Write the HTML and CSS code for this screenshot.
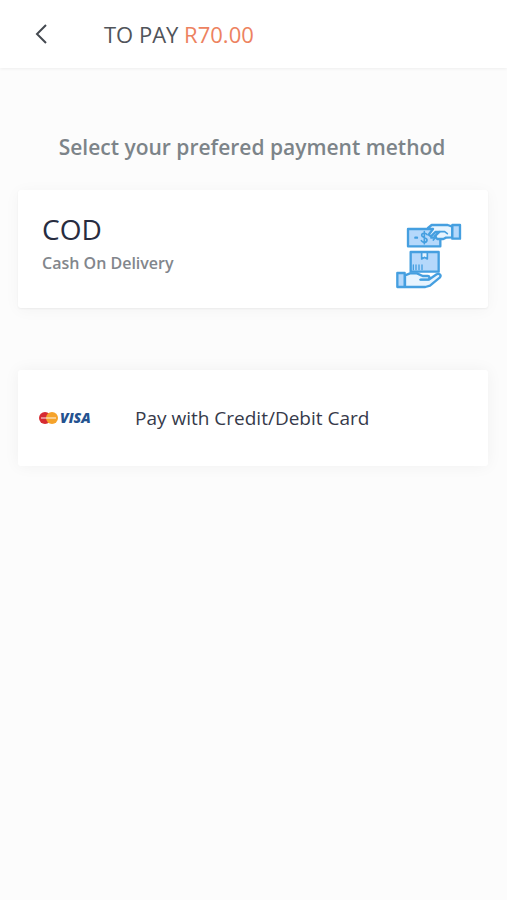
FILE: index.html
```html
<!DOCTYPE html>
<html lang="en">
<head>
<meta charset="utf-8">
<meta name="viewport" content="width=device-width, initial-scale=1">
<title>Payment</title>
<link rel="stylesheet" href="styles.css">
</head>
<body>
<header class="topbar">
  <button class="back" type="button" aria-label="Back">
    <svg width="12" height="20" viewBox="0 0 12 20" fill="none" stroke="currentColor" stroke-width="2"><path d="M11 1 2 10l9 9"/></svg>
  </button>
  <h1 class="title">TO PAY <span class="amount">R70.00</span></h1>
</header>
<main class="content">
  <h2 class="prompt">Select your prefered payment method</h2>
  <button class="card cod" type="button">
    <span class="cod-text">
      <span class="cod-name">COD</span>
      <span class="cod-note">Cash On Delivery</span>
    </span>
    <svg class="cod-icon" width="66" height="66" viewBox="35 41 198 198" fill="none" stroke="#459fe0" stroke-width="7" stroke-linejoin="round" stroke-linecap="round" aria-hidden="true">
      <path fill="#b5d8fb" d="M71 59h97v52H71z"/>
      <path d="M128 76c-3-6-16-6-16 2s16 5 16 14-13 9-17 2M120 67v36" stroke-width="5"/>
      <path d="M93 85h5M141 85h5" stroke-width="7"/>
      <path fill="#e7f4ff" d="M131 56l11-9h48l14 5v32l-19 1-8 4h-18l-8-8 14-13h-12l-13 13-7-5 13-17z"/>
      <path d="M165 67h16l8 6M155 82l-8 10" stroke-width="5"/>
      <path fill="#b5d8fb" d="M204 47h23v41h-23z"/>
      <path fill="#b5d8fb" d="M79 128h84v59H79z"/>
      <path fill="#e7f4ff" d="M112 129h17v20l-8-5-9 5z" stroke-width="5"/>
      <path d="M87 167v14M95 167v14M104 167v14M113 167v14" stroke-width="4"/>
      <path fill="#e7f4ff" d="M62 198l15-6h21l17 8h15c7 0 7 11 0 11h-20 23l24-16c7-4 15 2 10 9l-30 25-14 4H62z"/>
      <path d="M107 211h24" stroke-width="5"/>
      <path fill="#b5d8fb" d="M39 191h22v42H39z"/>
    </svg>
  </button>
  <button class="card credit" type="button">
    <svg class="brands" width="58" height="20" viewBox="0 0 58 20" aria-hidden="true">
      <circle cx="7" cy="10" r="6" fill="#d62b32"/>
      <circle cx="14" cy="10" r="6" fill="#f5a32b"/>
      <path d="M3 10h15" stroke="#fff" stroke-width="2" opacity=".45"/>
      <text class="visa" x="22" y="15">VISA</text>
    </svg>
    <span class="credit-label">Pay with Credit/Debit Card</span>
  </button>
</main>
</body>
</html>
```
FILE: styles.css
```css
* {
  box-sizing: border-box;
}

body {
  margin: 0;
  min-height: 100vh;
  background: #fcfcfc;
  color: #282c3f;
  font-family: "Open Sans", "Noto Sans", sans-serif;
}

button {
  font: inherit;
  color: inherit;
  border: 0;
  cursor: pointer;
}

.topbar {
  display: flex;
  align-items: center;
  gap: 47px;
  height: 68px;
  padding: 0 25px;
  background: #fff;
  box-shadow: 0 1px 3px rgba(0, 0, 0, 0.06);
}

.back {
  display: flex;
  justify-content: center;
  width: 32px;
  padding: 6px 0;
  background: none;
  color: #444950;
}

.title {
  margin: 0;
  font-size: 22px;
  line-height: 32px;
  font-weight: 500;
  color: #50545a;
}

.amount {
  color: #ed8260;
}

.content {
  display: flex;
  flex-direction: column;
  padding: 63px 19px 0 18px;
}

.prompt {
  margin: 0 0 27px;
  padding-right: 2px;
  font-size: 21px;
  line-height: 32px;
  font-weight: 600;
  text-align: center;
  color: #7c8489;
}

.card {
  display: flex;
  align-items: center;
  width: 100%;
  background: #fff;
  border-radius: 3px;
  text-align: left;
}

.cod {
  justify-content: space-between;
  margin-bottom: 62px;
  padding: 23px 26px 16px 24px;
  box-shadow: 0 1px 2px rgba(0, 0, 0, 0.05), 0 2px 16px rgba(0, 0, 0, 0.04);
}

.cod-text {
  display: flex;
  flex-direction: column;
  align-self: flex-start;
}

.cod-name {
  font-size: 28px;
  line-height: 32px;
  font-weight: 500;
}

.cod-note {
  margin-top: 6px;
  font-size: 16px;
  line-height: 24px;
  font-weight: 600;
  color: #82868c;
}

.cod-icon {
  margin: 10px 0 3px;
}

.credit {
  gap: 39px;
  padding: 32px 20px;
  box-shadow: 0 0 16px rgba(0, 0, 0, 0.05);
}

.visa {
  font-size: 14px;
  font-weight: 800;
  font-style: italic;
  fill: #24528f;
}

.credit-label {
  font-size: 19px;
  line-height: 32px;
  font-weight: 500;
  color: #363a4a;
}
```
